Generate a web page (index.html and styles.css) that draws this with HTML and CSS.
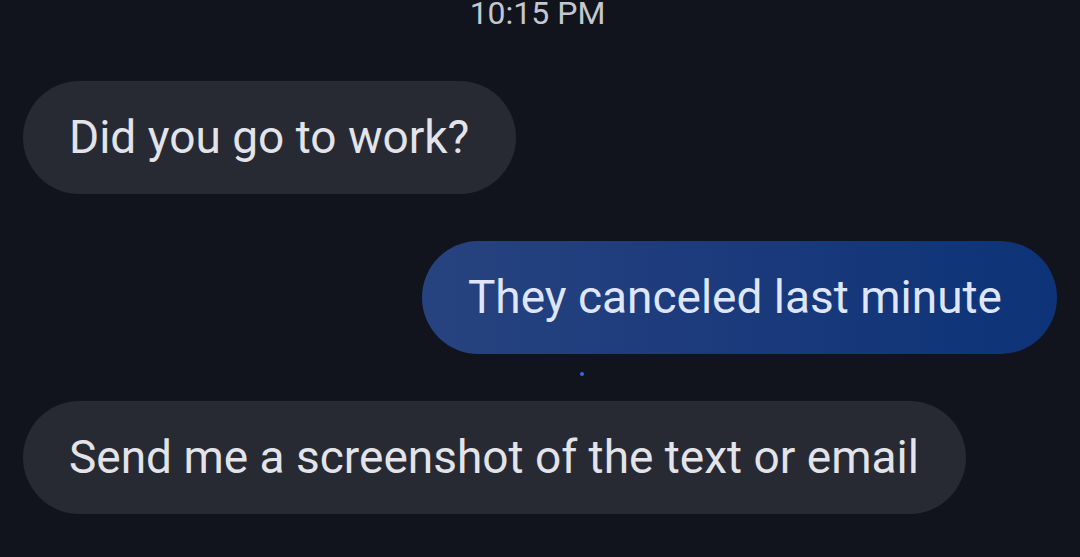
FILE: index.html
```html
<!DOCTYPE html>
<html>
<head>
<meta charset="utf-8">
<link rel="stylesheet" href="styles.css">
</head>
<body>
<div class="thread">
  <div class="time">10:15 PM</div>
  <div class="row in"><div class="bubble gray">Did you go to work?</div></div>
  <div class="row out"><div class="bubble blue">They canceled last minute</div></div>
  <div class="status"><span class="dot"></span></div>
  <div class="row in"><div class="bubble gray">Send me a screenshot of the text or email</div></div>
</div>
</body>
</html>
```

FILE: styles.css
```css
html, body {
  margin: 0;
  padding: 0;
  background: #11141c;
  height: 100%;
  overflow: hidden;
}
.thread {
  display: flex;
  flex-direction: column;
  padding: 0 23px;
  font-family: Roboto, "Noto Sans", sans-serif;
}
.time {
  margin-top: -6px;
  height: 38px;
  line-height: 38px;
  font-size: 32px;
  text-align: center;
  color: #c4c7cf;
  margin-right: 5px;
  margin-bottom: 49px;
}
.row {
  display: flex;
}
.row.in { justify-content: flex-start; }
.row.out { justify-content: flex-end; margin-top: 47px; }
.bubble {
  font-size: 46px;
  line-height: 55px;
  padding: 29px 47px 29px 46px;
  border-radius: 57px;
  white-space: nowrap;
}
.gray {
  background: #272a33;
  color: #e3e3ea;
}
.blue {
  background: linear-gradient(90deg, #27437f 0%, #1b3a7c 50%, #0d3378 100%);
  color: #dfe6fb;
  padding-right: 55px;
}
.status {
  height: 47px;
  display: flex;
}
.dot {
  width: 4px;
  height: 4px;
  border-radius: 50%;
  background: #3a63f0;
  margin-left: 557px;
  margin-top: 18px;
}
```
